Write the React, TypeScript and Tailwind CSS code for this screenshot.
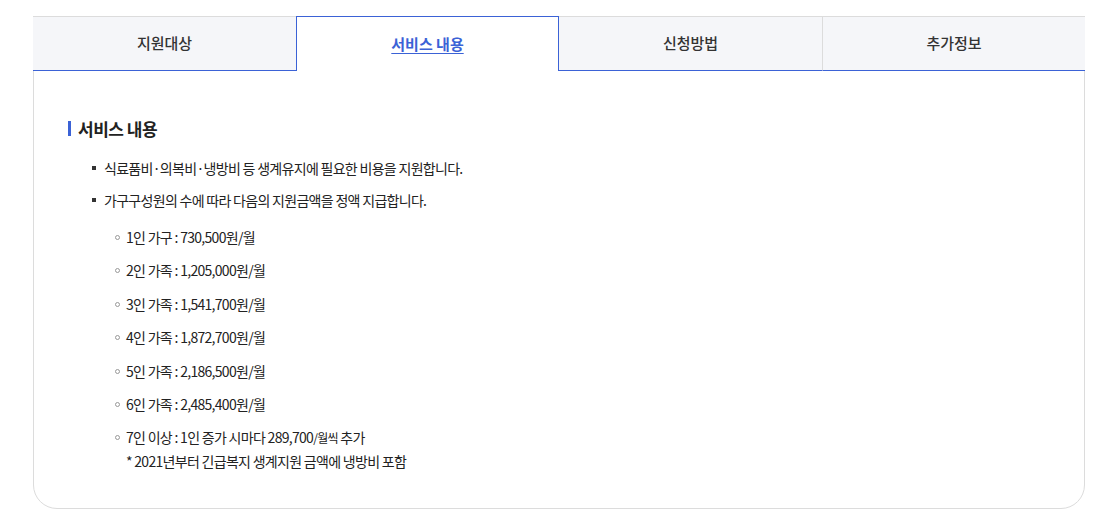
import React from 'react';

const tabs = ['지원대상', '서비스 내용', '신청방법', '추가정보'];

const amounts = [
  { label: '1인 가구', value: '730,500원/월' },
  { label: '2인 가족', value: '1,205,000원/월' },
  { label: '3인 가족', value: '1,541,700원/월' },
  { label: '4인 가족', value: '1,872,700원/월' },
  { label: '5인 가족', value: '2,186,500원/월' },
  { label: '6인 가족', value: '2,485,400원/월' },
];

const SubItem = ({ children }: { children: React.ReactNode }) => (
  <li className="flex items-start gap-[6px]">
    <span className="mt-[8px] w-[5px] h-[5px] rounded-full border border-[#999] shrink-0" />
    <div>{children}</div>
  </li>
);

export default function App() {
  return (
    <div
      className="bg-white w-[1110px] h-[519px] pt-[16px] pl-[33px]"
      style={{ fontFamily: '"Noto Sans CJK KR", "Noto Sans", sans-serif' }}
    >
      <div className="w-[1052px] h-[493px] border border-[#dcdcdc] rounded-b-[24px] text-[#222]">
        {/* tabs */}
        <div className="grid grid-cols-4 h-[55px] -mt-px -mx-px">
          {tabs.map((t, i) =>
            i === 1 ? (
              <div
                key={t}
                className="flex items-center justify-center bg-white border border-b-0 border-[#3b62d6] text-[#3b62d6] text-[15px] font-bold underline underline-offset-[3px]"
              >
                {t}
              </div>
            ) : (
              <div
                key={t}
                className={`flex items-center justify-center bg-[#f5f6f9] border-t border-[#dcdcdc] border-b border-b-[#3b62d6] text-[15px] font-medium text-[#333] ${i === 3 ? 'border-l border-l-[#dcdcdc]' : ''}`}
              >
                {t}
              </div>
            )
          )}
        </div>

        <div className="pl-[34px] pt-[49px]">
          <h3 className="flex items-center gap-[7px] text-[17px] font-bold leading-none text-[#222] tracking-[-0.5px]">
            <span className="w-[3px] h-[15px] bg-[#3b62d6]" />
            서비스 내용
          </h3>

          <ul className="mt-[21px] pl-[24px] text-[14px] leading-[20px] tracking-[-0.7px]">
            <li className="flex items-start gap-[8px]">
              <span className="mt-[8px] w-[4px] h-[4px] bg-[#333] shrink-0" />
              식료품비·의복비·냉방비 등 생계유지에 필요한 비용을 지원합니다.
            </li>
            <li className="flex items-start gap-[8px] mt-[12px]">
              <span className="mt-[8px] w-[4px] h-[4px] bg-[#333] shrink-0" />
              <div>
                가구구성원의 수에 따라 다음의 지원금액을 정액 지급합니다.
                <ul className="mt-[17px] ml-[11px] flex flex-col gap-[13.4px]">
                  {amounts.map((a) => (
                    <SubItem key={a.label}>
                      {a.label} : {a.value}
                    </SubItem>
                  ))}
                  <SubItem>
                    7인 이상 : 1인 증가 시마다 289,700<span className="text-[12px]">/월씩</span> 추가
                    <p className="mt-[3px]">* 2021년부터 긴급복지 생계지원 금액에 냉방비 포함</p>
                  </SubItem>
                </ul>
              </div>
            </li>
          </ul>
        </div>
      </div>
    </div>
  );
}
